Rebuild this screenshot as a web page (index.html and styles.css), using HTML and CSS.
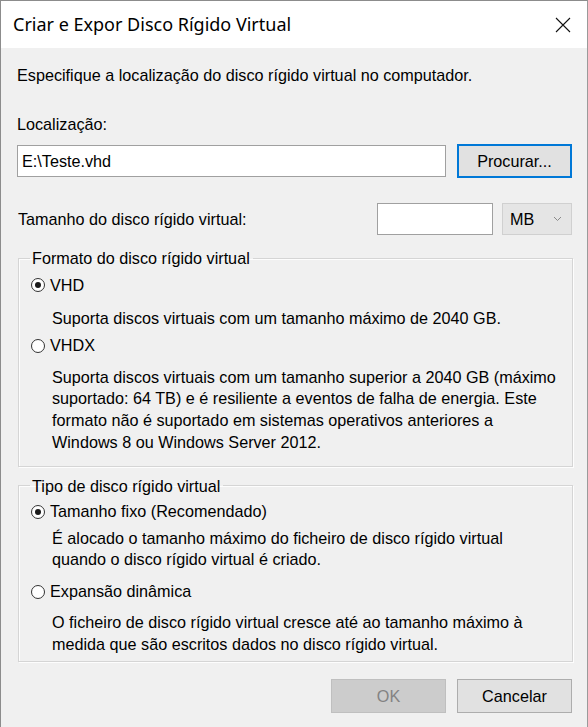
FILE: index.html
```html
<!DOCTYPE html>
<html lang="pt">
<head>
<meta charset="utf-8">
<title>Criar e Expor Disco Rígido Virtual</title>
<link rel="stylesheet" href="styles.css">
</head>
<body>
<div class="window">
  <div class="titlebar">
    <span class="title">Criar e Expor Disco Rígido Virtual</span>
    <span class="close">
      <svg width="16" height="16" viewBox="0 0 16 16"><path d="M1 1 L15 15 M15 1 L1 15" stroke="#111" stroke-width="1.1" fill="none"/></svg>
    </span>
  </div>
  <div class="content">
    <p class="intro">Especifique a localização do disco rígido virtual no computador.</p>
    <p class="label">Localização:</p>
    <div class="row-loc">
      <div class="textbox loc">E:\Teste.vhd</div>
      <button class="btn btn-focus">Procurar...</button>
    </div>
    <div class="row-size">
      <span class="size-label">Tamanho do disco rígido virtual:</span>
      <div class="textbox size"></div>
      <div class="combo"><span>MB</span>
        <svg width="9" height="6" viewBox="0 0 9 6"><path d="M1 1 L4.5 4.5 L8 1" stroke="#8a8a8a" stroke-width="1" fill="none"/></svg>
      </div>
    </div>
    <fieldset class="group g1">
      <legend>Formato do disco rígido virtual</legend>
      <div class="radio r-vhd"><span class="dot on"></span><span>VHD</span></div>
      <p class="desc d-vhd">Suporta discos virtuais com um tamanho máximo de 2040 GB.</p>
      <div class="radio r-vhdx"><span class="dot"></span><span>VHDX</span></div>
      <p class="desc d-vhdx">Suporta discos virtuais com um tamanho superior a 2040 GB (máximo suportado: 64 TB) e é resiliente a eventos de falha de energia. Este formato não é suportado em sistemas operativos anteriores a Windows 8 ou Windows Server 2012.</p>
    </fieldset>
    <fieldset class="group g2">
      <legend>Tipo de disco rígido virtual</legend>
      <div class="radio r-fixed"><span class="dot on"></span><span>Tamanho fixo (Recomendado)</span></div>
      <p class="desc d-fixed">É alocado o tamanho máximo do ficheiro de disco rígido virtual quando o disco rígido virtual é criado.</p>
      <div class="radio r-dyn"><span class="dot"></span><span>Expansão dinâmica</span></div>
      <p class="desc d-dyn">O ficheiro de disco rígido virtual cresce até ao tamanho máximo à medida que são escritos dados no disco rígido virtual.</p>
    </fieldset>
    <div class="actions">
      <button class="btn btn-disabled">OK</button>
      <button class="btn">Cancelar</button>
    </div>
  </div>
</div>
</body>
</html>
```

FILE: styles.css
```css
* { box-sizing: border-box; }
html, body { margin: 0; padding: 0; }
body {
  width: 588px;
  height: 727px;
  overflow: hidden;
  font-family: "Liberation Sans", Arial, sans-serif;
  font-size: 16.2px;
  color: #000;
  background: #f0f0f0;
}
.window {
  width: 588px;
  height: 727px;
  border-left: 1px solid #8c8c8c;
  border-right: 1px solid #9a9a9a;
  border-top: 1px solid #8c8c8c;
  background: #f0f0f0;
}
.titlebar {
  height: 47px;
  background: #fff;
  display: flex;
  align-items: center;
  justify-content: space-between;
  padding: 0 16px 0 12px;
}
.title {
  font-family: "Noto Sans", "Open Sans", sans-serif;
  font-size: 18px;
  color: #000;
  padding-bottom: 1px;
}
.close { display: flex; width: 16px; height: 16px; margin-top: 1px; }
.content {
  padding: 0 15px 0 16px;
}
p { margin: 0; }
.intro { line-height: 20px; margin-top: 17px; }
.label { line-height: 20px; margin-top: 29px; }
.row-loc {
  display: flex;
  align-items: center;
  gap: 11px;
  margin-top: 10px;
  height: 34px;
}
.textbox {
  background: #fff;
  border: 1px solid #a0a0a0;
  height: 32px;
  line-height: 30px;
  padding: 0 4px;
}
.loc { flex: 1; }
.btn {
  font-family: "Liberation Sans", Arial, sans-serif;
  font-size: 16.2px;
  color: #000;
  width: 115px;
  height: 34px;
  background: #e1e1e1;
  border: 1px solid #adadad;
  padding: 0;
}
.btn-focus {
  border: 2px solid #0078d7;
}
.row-size {
  display: flex;
  align-items: center;
  margin-top: 25px;
  height: 32px;
}
.size-label { flex: 1; padding-left: 1px; }
.size { width: 116px; }
.combo {
  width: 70px;
  height: 32px;
  margin-left: 9px;
  background: #e5e5e5;
  border: 1px solid #d0d0d0;
  display: flex;
  align-items: center;
  justify-content: space-between;
  padding: 0 9px 0 7px;
}
.group {
  margin: 13px 0 0 1px;
  padding: 0 14px 0 0;
  width: 555px;
  border: 1px solid #d5d5d5;
  box-shadow: inset 1px 1px 0 #fdfdfd, 1px 1px 0 #fdfdfd;
}
.group legend {
  padding: 0 3px 0 2px;
  margin-left: 11px;
  line-height: 20px;
}
.radio {
  display: flex;
  align-items: center;
  gap: 5px;
  height: 20px;
  margin-left: 12px;
}
.dot {
  width: 14px;
  height: 14px;
  border: 1px solid #333;
  border-radius: 50%;
  background: #fff;
  display: flex;
  align-items: center;
  justify-content: center;
}
.dot.on::after {
  content: "";
  width: 6px;
  height: 6px;
  border-radius: 50%;
  background: #1a1a1a;
}
.desc {
  margin-left: 33px;
  line-height: 21.7px;
}
.r-vhd { margin-top: 7px; }
.d-vhd { margin-top: 13px; }
.r-vhdx { margin-top: 6px; }
.d-vhdx { margin-top: 11px; margin-bottom: 12px; }
.g2 { margin-top: 9px; }
.r-fixed { margin-top: 6px; }
.d-fixed { margin-top: 6px; }
.r-dyn { margin-top: 11px; }
.d-dyn { margin-top: 10px; margin-bottom: 6px; }
.actions {
  display: flex;
  justify-content: flex-end;
  gap: 11px;
  margin-top: 17px;
}
.actions .btn { height: 34px; }
.btn-disabled {
  background: #cccccc;
  border-color: #bfbfbf;
  color: #838383;
}
```
